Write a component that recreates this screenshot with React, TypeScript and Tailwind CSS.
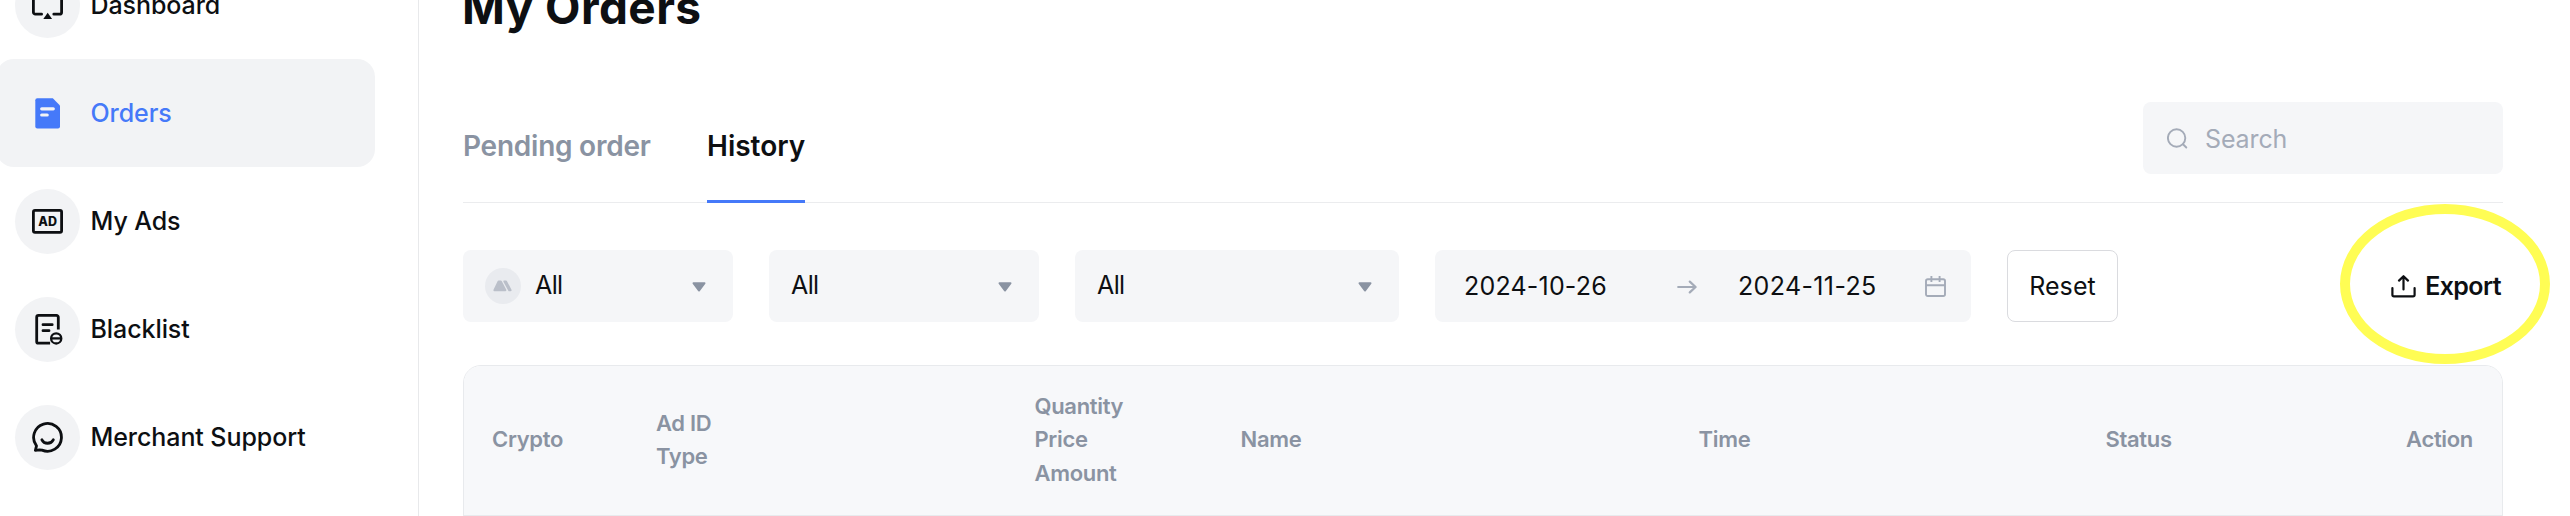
import React from 'react';

interface NavItem {
  label: string;
  icon: React.ReactNode;
  active?: boolean;
}

const navItems: NavItem[] = [
  {
    label: 'Dashboard',
    icon: (
      <>
        <path
          d="M10.6 25.2H4.4a2 2 0 0 1-2-2V7a2 2 0 0 1 2-2h24.2a2 2 0 0 1 2 2v16.2a2 2 0 0 1-2 2h-5.8"
          stroke="currentColor"
          strokeWidth="2.8"
          strokeLinecap="round"
        />
        <path d="M16.7 23.8l4.4 6.2h-8.8z" fill="currentColor" />
      </>
    ),
  },
  {
    label: 'Orders',
    active: true,
    icon: (
      <>
        <path d="M6.3 1.2h15.5L29 8.5v21a2 2 0 0 1-2 2H6.3a2 2 0 0 1-2-2V3.2a2 2 0 0 1 2-2z" fill="#4579f9" />
        <path d="M10.7 11.8H22.3M10.7 18h5.5" stroke="#f2f3f5" strokeWidth="3.2" strokeLinecap="round" />
      </>
    ),
  },
  {
    label: 'My Ads',
    icon: (
      <>
        <rect x="2.4" y="5.4" width="28.2" height="22" rx="1.6" stroke="currentColor" strokeWidth="2.8" />
        <text
          x="16.6"
          y="21"
          textAnchor="middle"
          fill="currentColor"
          className="text-[12.5px] font-extrabold"
        >
          AD
        </text>
      </>
    ),
  },
  {
    label: 'Blacklist',
    icon: (
      <>
        <path
          d="M27.3 16.6V4.2a1.8 1.8 0 0 0-1.8-1.8H7.5a1.8 1.8 0 0 0-1.8 1.8v24.2a1.8 1.8 0 0 0 1.8 1.8h11.6"
          stroke="currentColor"
          strokeWidth="2.8"
        />
        <path d="M12 11.7h9.2M12 17.7h6" stroke="currentColor" strokeWidth="2.8" strokeLinecap="round" />
        <circle cx="25.2" cy="25.4" r="5.1" stroke="currentColor" strokeWidth="2.3" />
        <path d="M20.4 25.4h9.6" stroke="currentColor" strokeWidth="2.3" />
      </>
    ),
  },
  {
    label: 'Merchant Support',
    icon: (
      <g stroke="currentColor" strokeWidth="2.8" strokeLinecap="round" strokeLinejoin="round">
        <path d="M11 29.1A13.9 13.9 0 1 0 5.5 24.8L4.4 29.4 8.5 28.8 11 29.1z" />
        <path d="M10.9 18.8c2.2 4.6 9 4.6 11.4 0" />
      </g>
    ),
  },
];

const Sidebar: React.FC = () => (
  <aside className="w-[419px] shrink-0 border-r border-[#e8e9eb]">
    <nav className="-mt-[49px] -ml-1 w-[379px]">
      {navItems.map((item) => (
        <a
          key={item.label}
          className={`flex h-[108px] items-center gap-[10.5px] rounded-[18px] pt-px pl-[19px] text-[25px] leading-8 font-medium ${
            item.active ? 'bg-[#f2f3f5] text-[#4579f9]' : 'text-[#0d0f12]'
          }`}
        >
          <span className="flex size-[65px] items-center justify-center rounded-full bg-[#f2f3f5]">
            <svg className="size-[33px]" viewBox="0 0 33 33" fill="none">
              {item.icon}
            </svg>
          </span>
          <span className="pb-0.5 tracking-[-0.08px]">{item.label}</span>
        </a>
      ))}
    </nav>
  </aside>
);

const Caret: React.FC = () => (
  <svg className="mt-px h-[10px] w-[14px]" viewBox="0 0 14 10">
    <path
      d="M1.4 1.2h11.2L7 8.6z"
      fill="#8a93a2"
      stroke="#8a93a2"
      strokeWidth="1.8"
      strokeLinejoin="round"
    />
  </svg>
);

const CoinIcon: React.FC = () => (
  <svg className="mr-[14px] size-9" viewBox="0 0 36 36">
    <circle cx="18" cy="18" r="18" fill="#e9ebef" />
    <g fill="#babfc9" stroke="#babfc9" strokeWidth="2" strokeLinejoin="round">
      <path d="M9.4 22.2l4.2-8.8h2.2l4.6 8.8z" />
      <path d="M19.4 13.4h1.6l4.6 8.8h-1.4z" />
    </g>
  </svg>
);

const Select: React.FC<{ className: string; icon?: React.ReactNode }> = ({ className, icon }) => (
  <div className={`flex h-[72px] items-center rounded-lg bg-[#f5f6f8] pr-[27px] pl-[22px] ${className}`}>
    {icon}
    <span className="flex-1 pb-0.5 tracking-[-0.6px]">All</span>
    <Caret />
  </div>
);

const DateRange: React.FC = () => (
  <div className="flex h-[72px] w-[536px] items-center rounded-lg bg-[#f5f6f8] pl-[29px]">
    <span className="w-[213px] tracking-[0.2px]">2024-10-26</span>
    <svg className="mt-px h-[14px] w-5" viewBox="0 0 20 14" fill="none">
      <path
        d="M1.2 7h17.2M12.8 1.6L18.6 7l-5.8 5.4"
        stroke="#a4abb8"
        strokeWidth="2.2"
        strokeLinecap="round"
        strokeLinejoin="round"
      />
    </svg>
    <span className="ml-[41px] w-[187px] tracking-[0.36px]">2024-11-25</span>
    <svg className="size-[21px]" viewBox="0 0 21 21" fill="none">
      <g stroke="#a4abb8" strokeWidth="1.9">
        <rect x="1" y="3.2" width="19" height="16.8" rx="1.8" />
        <path d="M1 9.3h19M6.4 0v6M14.6 0v6" />
      </g>
    </svg>
  </div>
);

const columns = [
  ['Crypto'],
  ['Ad ID', 'Type'],
  ['Quantity', 'Price', 'Amount'],
  ['Name'],
  ['Time'],
  ['Status'],
  ['Action'],
];

const App: React.FC = () => {
  return (
    <div className="relative flex h-[516px] w-[2570px] overflow-hidden bg-white font-['Inter','Liberation_Sans',sans-serif] text-[#0d0f12]">
      <Sidebar />

      <main className="ml-11 w-[2040px] shrink-0">
        <h1 className="-mt-[21px] -ml-px h-14 text-[46px] leading-[56px] font-bold tracking-[0.4px]">My Orders</h1>

        {/* Tabs and search */}
        <div className="mt-[67px] flex h-[101px] justify-between border-b border-[#ebecee]">
          <div className="flex text-[28px] leading-[35px]">
            <div className="h-[101px] w-[244px] pt-[27px] font-semibold tracking-[-0.24px] text-[#8a93a2]">Pending order</div>
            <div className="h-[101px] border-b-3 border-[#4579f9] pt-[27px] font-semibold">History</div>
          </div>
          <div className="flex h-[72px] w-[360px] items-center rounded-lg bg-[#f5f6f8] pl-6 text-[25px] text-[#a4abb8]">
            <svg className="size-[21px]" viewBox="0 0 21 21" fill="none">
              <g stroke="#a4abb8" strokeWidth="1.9" strokeLinecap="round">
                <circle cx="9.6" cy="10" r="8.7" />
                <path d="M16 16.3l3.3 3.2" />
              </g>
            </svg>
            <span className="ml-[17px] pt-[3px] tracking-[-0.12px]">Search</span>
          </div>
        </div>

        {/* Filters */}
        <div className="mt-[47px] flex h-[72px] items-center gap-9 text-[25px] leading-8">
          <Select className="w-[270px]" icon={<CoinIcon />} />
          <Select className="w-[270px]" />
          <Select className="w-[324px]" />
          <DateRange />
          <button className="h-[72px] w-[111px] rounded-lg border border-[#dadbdf] tracking-[0.1px]">Reset</button>
          <button className="ml-auto flex items-center gap-[9px] font-semibold">
            <svg className="h-[23px] w-[25px]" viewBox="0 0 25 23" fill="none">
              <g stroke="currentColor" strokeWidth="2.2" strokeLinecap="round" strokeLinejoin="round">
                <path d="M1.4 13v6.8a1.6 1.6 0 0 0 1.6 1.6h19a1.6 1.6 0 0 0 1.6-1.6V13" />
                <path d="M12.5 14.4V1.6M8 5.6l4.5-4.4L17 5.6" />
              </g>
            </svg>
            <span className="pr-0.5 tracking-[-0.6px]">Export</span>
          </button>
        </div>

        {/* Orders table */}
        <div className="mt-[43px] h-[200px] overflow-hidden rounded-t-[18px] border border-[#e8eaed]">
          <div className="grid h-[150px] grid-cols-[164px_378.5px_206px_458px_407px_1fr_auto] items-center border-b border-[#e8eaed] bg-[#f7f8fa] pr-[29px] pb-px pl-7 text-[22px] leading-[33.5px] font-semibold tracking-[-0.32px] text-[#8a93a2]">
            {columns.map((lines) => (
              <div key={lines[0]}>
                {lines.map((line) => (
                  <div key={line}>{line}</div>
                ))}
              </div>
            ))}
          </div>
        </div>
      </main>

      {/* Highlight ring around Export */}
      <div className="absolute top-[204px] left-[2340px] h-[160px] w-[210px] rounded-[50%] border-[10px] border-[#fffd54]" />
    </div>
  );
};

export default App;
